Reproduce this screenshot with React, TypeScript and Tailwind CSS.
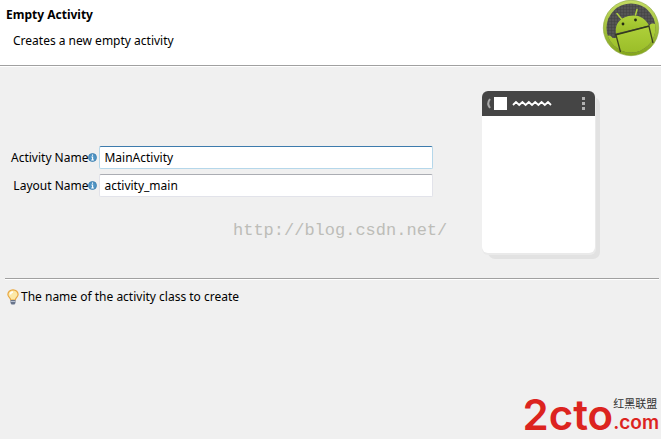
import { useState } from "react";

function AndroidLogo() {
  return (
    <svg width="58" height="58" viewBox="0 0 58 58" aria-hidden="true">
      <defs>
        <linearGradient id="ring" x1="0" y1="0" x2="0" y2="1">
          <stop offset="0" stopColor="#c3dc62" />
          <stop offset="1" stopColor="#83a51a" />
        </linearGradient>
        <linearGradient id="robot" x1="0" y1="0" x2="0" y2="1">
          <stop offset="0" stopColor="#b0d23c" />
          <stop offset="1" stopColor="#98bb26" />
        </linearGradient>
        <pattern id="mesh" width="3" height="3" patternUnits="userSpaceOnUse">
          <rect width="3" height="3" fill="#555" />
          <path d="M0 0h3M0 0v3" stroke="#404040" strokeWidth="1" />
        </pattern>
        <clipPath id="disc">
          <circle cx="29" cy="28" r="24.5" />
        </clipPath>
      </defs>
      <circle cx="29" cy="28" r="27.7" fill="url(#ring)" stroke="#86a137" strokeWidth="0.6" />
      <circle cx="29" cy="28" r="24.5" fill="url(#mesh)" />
      <g clipPath="url(#disc)">
        <path d="M14 33.500C12.500 24 18 18 26.500 16C35 14 43 17 47 25.500Z" fill="url(#robot)" />
        <path d="M14 35L47 26.500C48 23.500 51 22.500 54 25V56H4V38C5 34.500 9 34.500 10.500 38H15Z" fill="url(#robot)" />
      </g>
      <path d="M13 35L47.500 26" stroke="#343b1d" strokeWidth="1.300" />
      <path d="M14 35L18.500 52M47 26.500L51 43" stroke="#3b431d" strokeWidth="1.300" />
      <path d="M19.500 19L15 13.500M33.500 15L35 9.500" stroke="#b0d23c" strokeWidth="1.500" strokeLinecap="round" />
      <circle cx="21" cy="24" r="1.400" fill="#252b12" />
      <circle cx="33.500" cy="20" r="1.400" fill="#252b12" />
    </svg>
  );
}

function InfoIcon() {
  return (
    <svg width="9" height="9" viewBox="0 0 9 9" className="shrink-0" aria-hidden="true">
      <circle cx="4.500" cy="4.500" r="4" fill="#4f94c4" stroke="#3c7fae" strokeWidth="0.800" />
      <path d="M4.500 1.500v1.200M3.400 4h1.200v2.800M3.200 7h2.700" fill="none" stroke="#fff" strokeWidth="1.100" />
    </svg>
  );
}

function BulbIcon() {
  return (
    <svg width="12" height="16" viewBox="0 0 12 16" className="shrink-0" aria-hidden="true">
      <path
        d="M6 .8C2.900.8.900 3 .900 5.500C.900 8 3.500 8.700 3.700 11H8.300C8.500 8.700 11.100 8 11.100 5.500C11.100 3 9.100.8 6 .8Z"
        fill="#fde9a8"
        stroke="#e8a640"
        strokeWidth="1.200"
      />
      <path d="M3.500 5.500C3.500 4 4.400 3 6 3" fill="none" stroke="#fff" strokeWidth="1.600" />
      <path d="M3.500 11h5v3l-1 1.500h-3l-1-1.500Z" fill="#68748b" />
      <path d="M4 12.500h4" stroke="#b5bfd0" />
    </svg>
  );
}

function PhonePreview() {
  return (
    <svg width="120" height="170" viewBox="0 0 120 170" className="shrink-0" role="img" aria-label="Activity preview">
      <rect x="7" y="7" width="112" height="162" rx="7" fill="#e2e2e2" />
      <rect x="1" y="2" width="114" height="163" rx="6" fill="#eaeaea" />
      <rect x="1" y="1" width="113" height="162" rx="6" fill="#fff" />
      <path d="M1 26V7a6 6 0 0 1 6-6h101a6 6 0 0 1 6 6v19Z" fill="#454545" />
      <path d="M9 9Q5.500 13.500 9 18" fill="none" stroke="#aaa" strokeWidth="2" />
      <rect x="13" y="7" width="13" height="13" fill="#fff" />
      <path
        d="M32 15l3-3 3.200 3 3.200-3 3.200 3 3.200-3 3.200 3 3.200-3 3.200 3 3.200-3 3.200 3 3.200-3 3 3"
        fill="none"
        stroke="#fff"
        strokeWidth="1.800"
      />
      <path d="M101 7h3v3h-3ZM101 12h3v3h-3ZM101 17h3v3h-3Z" fill="#b2b2b2" />
    </svg>
  );
}

function SiteLogo() {
  return (
    <div className="absolute right-0.5 bottom-1 flex items-end text-[#dc241f]">
      <span className="font-['Inter','Liberation_Sans',sans-serif] text-[42px] leading-10 font-semibold">2cto</span>
      <span className="flex flex-col">
        <span className="font-['Noto_Sans_CJK_SC',sans-serif] text-[11px] leading-4 text-[#333]">红黑联盟</span>
        <span className="font-['Inter','Liberation_Sans',sans-serif] text-[19px] leading-6 font-semibold">.com</span>
      </span>
    </div>
  );
}

export default function App() {
  const [activityName, setActivityName] = useState("MainActivity");
  const [layoutName, setLayoutName] = useState("activity_main");

  return (
    <div className="relative flex min-h-screen flex-col bg-[#f0f0f0] font-['Noto_Sans','Open_Sans',sans-serif] text-[12px] leading-5 text-black">
      <header className="flex items-start justify-between border-b border-[#a0a0a0] bg-white pr-px pb-[7px] pl-1.5">
        <div className="pt-[5px]">
          <h1 className="font-bold">Empty Activity</h1>
          <p className="mt-1.5 pl-[7px]">Creates a new empty activity</p>
        </div>
        <AndroidLogo />
      </header>

      <main className="flex items-start border-t border-white pt-[23px] pr-[60px] pl-[11px]">
        <form className="mt-14 mr-12 grid flex-1 grid-cols-[auto_1fr] gap-x-0.5 gap-y-[5px]">
          <label htmlFor="activity-name" className="flex items-center justify-end">
            Activity Name
            <InfoIcon />
          </label>
          <input
            id="activity-name"
            type="text"
            value={activityName}
            onChange={(e) => setActivityName(e.target.value)}
            className="h-[23px] w-full min-w-0 rounded-xs border border-[#b5d7ea] border-t-[#3d7bad] bg-white px-1 outline-none"
          />
          <label htmlFor="layout-name" className="flex items-center justify-end">
            Layout Name
            <InfoIcon />
          </label>
          <input
            id="layout-name"
            type="text"
            value={layoutName}
            onChange={(e) => setLayoutName(e.target.value)}
            className="h-[23px] w-full min-w-0 rounded-xs border border-[#e2e3ea] border-t-[#abadb3] bg-white px-1 outline-none"
          />
        </form>
        <PhonePreview />
      </main>

      <footer className="mr-0.5 ml-[5px] mt-[18px] border-t border-[#a0a0a0]">
        <div className="flex items-center border-t border-white pt-[7px] pl-0.5">
          <BulbIcon />
          <p className="pl-0.5">The name of the activity class to create</p>
        </div>
      </footer>

      <span className="pointer-events-none absolute top-[219px] left-[233px] font-['Liberation_Mono',monospace] text-[17px] leading-6 text-[#bdbdb8]">
        http://blog.csdn.net/
      </span>
      <SiteLogo />
    </div>
  );
}
